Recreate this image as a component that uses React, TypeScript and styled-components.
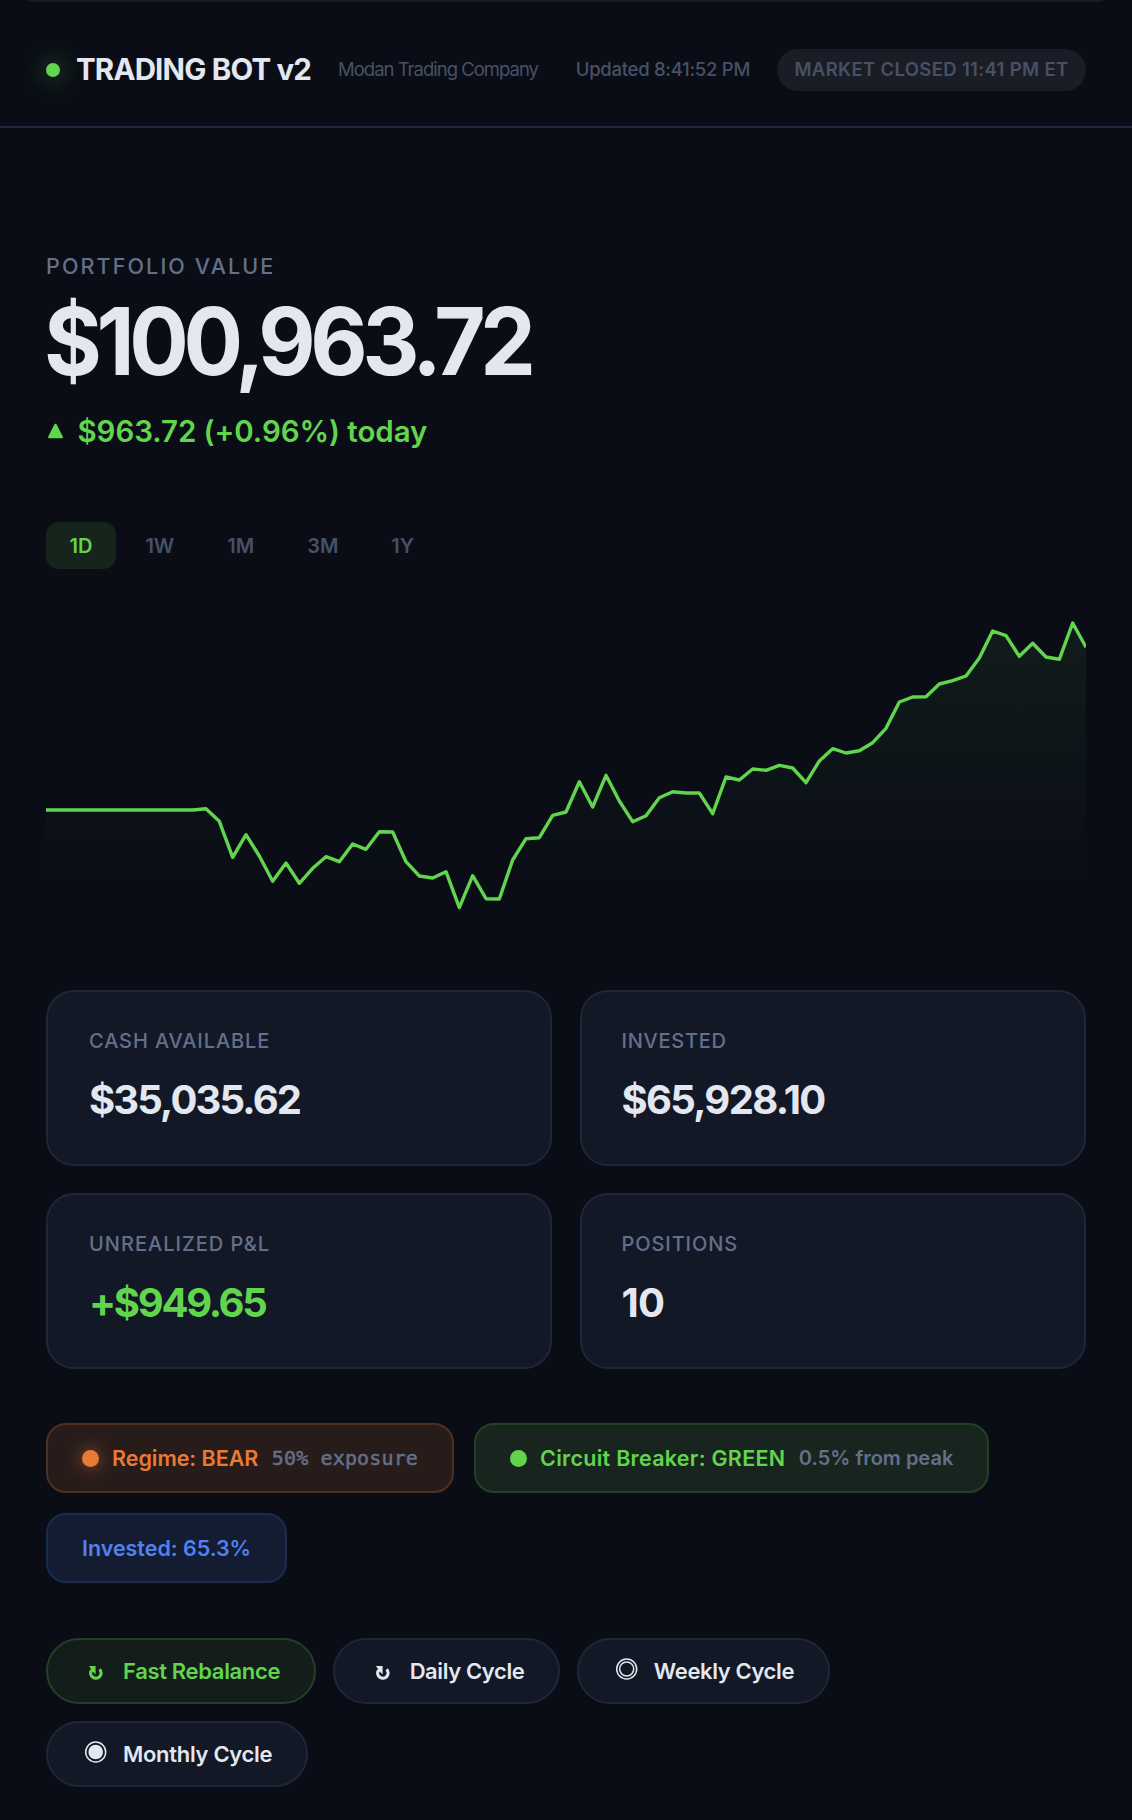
import React from "react";
import styled, { createGlobalStyle } from "styled-components";

const c = {
  bg: "#0a0d16",
  card: "#121826",
  line: "#1e2738",
  text: "#e3e7f0",
  muted: "#64708a",
  dim: "#475166",
  green: "#62d54f",
  orange: "#e87a35",
  blue: "#4f82f0",
};

const Global = createGlobalStyle`
  *, *::before, *::after { box-sizing: border-box; }
  html, body { margin: 0; background: ${c.bg}; }
  body { font-family: Inter, "Liberation Sans", sans-serif; color: ${c.text}; -webkit-font-smoothing: antialiased; }
  button { font-family: inherit; margin: 0; }
`;

const Page = styled.div`
  width: 1132px;
  height: 1820px;
  overflow: hidden;
  background: ${c.bg};
`;

const TopEdge = styled.div`
  height: 2px;
  margin: 0 28px;
  background: #1a1d25;
  border-radius: 0 0 12px 12px / 0 0 2px 2px;
`;

const Header = styled.header`
  display: flex;
  align-items: center;
  height: 126px;
  padding: 12px 46px 0;
  border-bottom: 2px solid #1e2740;
`;

const Txt = styled.span<{ $ls?: number }>`
  letter-spacing: ${(p) => p.$ls ?? 0}px;
  white-space: nowrap;
`;

const LiveDot = styled.span`
  width: 14px;
  height: 14px;
  border-radius: 50%;
  background: ${c.green};
  box-shadow: 0 0 24px rgba(98, 213, 79, 0.65);
`;

const Title = styled.h1`
  margin: 0 0 0 16px;
  padding-bottom: 2px;
  width: 262px;
  font-size: 29.5px;
  font-weight: 700;
  line-height: 36px;
`;

const Company = styled.span`
  padding-bottom: 2px;
  font-size: 18.5px;
  line-height: 24px;
  color: ${c.dim};
`;

const HeaderRight = styled.div`
  display: flex;
  align-items: center;
  gap: 27px;
  margin-left: auto;
`;

const Updated = styled.span`
  padding-bottom: 2px;
  font-size: 18.5px;
  font-weight: 500;
  line-height: 24px;
  color: ${c.dim};
`;

const MarketBadge = styled.span`
  display: flex;
  align-items: center;
  justify-content: center;
  width: 309px;
  height: 42px;
  padding-bottom: 2px;
  border-radius: 21px;
  background: #1a1d25;
  color: ${c.dim};
  font-size: 18.5px;
  font-weight: 600;
`;

const Main = styled.main`
  padding: 126px 46px 0;
`;

const HeroLabel = styled.div`
  font-size: 21.5px;
  font-weight: 500;
  line-height: 24px;
  color: ${c.muted};
`;

const HeroValue = styled.div`
  margin: 16px 0 0 -2px;
  font-size: 93px;
  font-weight: 700;
  line-height: 94px;
  transform: scaleX(0.95);
  transform-origin: left center;
`;

const Change = styled.div`
  display: flex;
  align-items: center;
  gap: 14.5px;
  margin-top: 25px;
  height: 36px;
  padding-left: 2px;
  font-size: 29.5px;
  font-weight: 600;
  line-height: 36px;
  color: ${c.green};
`;

const Tabs = styled.div`
  display: flex;
  gap: 6px;
  margin-top: 73px;
`;

const Tab = styled.button<{ $active?: boolean }>`
  height: 47px;
  padding: 0 23.5px;
  border: 0;
  border-radius: 13px;
  background: ${(p) => (p.$active ? "#16241c" : "transparent")};
  color: ${(p) => (p.$active ? c.green : c.dim)};
  font-size: 20px;
  font-weight: 600;
`;

const ChartSvg = styled.svg`
  display: block;
  margin-top: 31px;
`;

const Stats = styled.section`
  display: grid;
  grid-template-columns: 1fr 1fr;
  gap: 27px 28px;
  margin-top: 60px;
`;

const StatCard = styled.div`
  height: 176px;
  padding: 36px 41px;
  border: 2px solid ${c.line};
  border-radius: 28px;
  background: ${c.card};

  &:nth-child(even) {
    padding-left: 39.5px;
  }
`;

const StatLabel = styled.div`
  font-size: 20px;
  font-weight: 500;
  line-height: 26px;
  color: ${c.muted};
`;

const StatValue = styled.div<{ $up?: boolean }>`
  margin-top: 23px;
  font-size: 40px;
  font-weight: 700;
  line-height: 46px;
  color: ${(p) => (p.$up ? c.green : c.text)};
`;

const Pills = styled.section`
  display: flex;
  flex-wrap: wrap;
  gap: 20px;
  margin-top: 54px;
`;

const Pill = styled.div<{ $fg: string; $bg: string; $line: string }>`
  display: flex;
  align-items: center;
  height: 70px;
  padding: 0 34px;
  border: 2px solid ${(p) => p.$line};
  border-radius: 20px;
  background: ${(p) => p.$bg};
  color: ${(p) => p.$fg};
  font-size: 21.5px;
  font-weight: 600;
`;

const PillDot = styled.span<{ $glow?: boolean }>`
  width: 17px;
  height: 17px;
  margin-right: 13px;
  border-radius: 50%;
  background: currentColor;
  box-shadow: ${(p) => (p.$glow ? "0 0 16px rgba(232, 122, 53, 0.6)" : "none")};
`;

const PillNote = styled.span<{ $mono?: boolean }>`
  margin-left: 13.5px;
  padding-bottom: 1px;
  font-family: ${(p) => (p.$mono ? '"DejaVu Sans Mono", monospace' : "inherit")};
  font-weight: ${(p) => (p.$mono ? 400 : 600)};
  -webkit-text-stroke: ${(p) => (p.$mono ? "0.5px currentColor" : "0")};
  font-size: 20px;
  color: ${c.muted};
`;

const Actions = styled.section`
  display: flex;
  flex-wrap: wrap;
  gap: 17px;
  margin-top: 55px;
`;

const Action = styled.button<{ $primary?: boolean }>`
  display: flex;
  align-items: center;
  height: 66px;
  padding: 0 33.5px 0 34px;
  border: 2px solid ${(p) => (p.$primary ? "#224124" : c.line)};
  border-radius: 33px;
  background: ${(p) => (p.$primary ? "#131e1b" : c.card)};
  color: ${(p) => (p.$primary ? c.green : c.text)};
  font-size: 22px;
  font-weight: 600;
`;

const Glyph = styled.svg`
  display: block;
  width: 28px;
  height: 28px;
  margin-right: 13px;
`;

const STEP = 1040 / 78;
const flat = Array(12).fill(810);
const series: number[] = [
  ...flat,
  808.7, 821.3, 857.3, 834.7, 856, 881.3, 863, 883.3, 868.3, 856.7, 861.7, 844, 849.3, 831.7, 832,
  861.7, 876, 878, 871.7, 907.7, 875.7, 898.7, 899, 860, 838.7, 837.7, 815.3, 812, 781.7, 807, 775.3,
  801, 821.7, 815.7, 797.7, 791.7, 793, 793, 813.7, 777, 780, 769, 770.3, 765.3, 768, 782.7, 761,
  748.7, 753, 750.7, 742.7, 728.3, 702, 697, 696.7, 684, 680.7, 676, 658, 631, 635.7, 656.3, 643.3,
  657, 659.3, 623, 647.3,
];
const line = series.map((y, i) => `${(i * STEP).toFixed(2)},${(y - 600).toFixed(1)}`).join(" ");

function Chart() {
  return (
    <ChartSvg width="1040" height="330" viewBox="0 0 1040 330">
      <defs>
        <linearGradient id="area" gradientUnits="userSpaceOnUse" x1="0" y1="0" x2="0" y2="280">
          <stop offset="0" stopColor={c.green} stopOpacity="0.085" />
          <stop offset="1" stopColor={c.green} stopOpacity="0" />
        </linearGradient>
      </defs>
      <polygon points={`0,330 ${line} 1040,330`} fill="url(#area)" />
      <polyline points={line} fill="none" stroke={c.green} strokeWidth="3.4" strokeLinejoin="round" />
    </ChartSvg>
  );
}

function CycleGlyph() {
  return (
    <Glyph viewBox="0 0 28 28">
      <path d="M17.6 12.4 A5.2 5.2 0 1 1 9.4 13.4" fill="none" stroke="currentColor" strokeWidth="3.2" />
      <path d="M7 9 H13.6 V17.4 L10.9 14.8 L8.2 15 L9 12 Z" fill="currentColor" />
    </Glyph>
  );
}

function RingGlyph({ filled }: { filled?: boolean }) {
  return (
    <Glyph viewBox="0 0 28 28">
      <circle cx="13.7" cy="12" r="10" fill="none" stroke="currentColor" strokeWidth="1.5" />
      {filled ? (
        <circle cx="13.7" cy="12" r="7.3" fill="currentColor" />
      ) : (
        <circle cx="13.7" cy="12" r="7" fill="none" stroke="currentColor" strokeWidth="1.5" />
      )}
    </Glyph>
  );
}

const tabs = ["1D", "1W", "1M", "3M", "1Y"];

const stats: { label: string; ls: number; value: string; vls: number; up?: boolean }[] = [
  { label: "CASH AVAILABLE", ls: 0.9, value: "$35,035.62", vls: -1.85 },
  { label: "INVESTED", ls: 0.75, value: "$65,928.10", vls: -1.7 },
  { label: "UNREALIZED P&L", ls: 1, value: "+$949.65", vls: -2.3, up: true },
  { label: "POSITIONS", ls: 0.9, value: "10", vls: -0.8 },
];

export default function App() {
  return (
    <Page>
      <Global />
      <TopEdge />
      <Header>
        <LiveDot />
        <Title><Txt $ls={-0.82}>TRADING BOT v2</Txt></Title>
        <Company><Txt $ls={-1}>Modan Trading Company</Txt></Company>
        <HeaderRight>
          <Updated><Txt $ls={-0.27}>Updated 8:41:52 PM</Txt></Updated>
          <MarketBadge><Txt $ls={0.34}>MARKET CLOSED 11:41 PM ET</Txt></MarketBadge>
        </HeaderRight>
      </Header>
      <Main>
        <HeroLabel><Txt $ls={2.12}>PORTFOLIO VALUE</Txt></HeroLabel>
        <HeroValue><Txt $ls={-5.6}>$100,963.72</Txt></HeroValue>
        <Change>
          <svg width="15" height="16" viewBox="0 0 15 16">
            <path d="M7.5 2 L13.6 14 H1.4 Z" fill="currentColor" stroke="currentColor" strokeWidth="2.6" strokeLinejoin="round" />
          </svg>
          <Txt $ls={-0.07}>$963.72 (+0.96%) today</Txt>
        </Change>
        <Tabs>
          {tabs.map((t, i) => (
            <Tab key={t} $active={i === 0}>{t}</Tab>
          ))}
        </Tabs>
        <Chart />
        <Stats>
          {stats.map((s) => (
            <StatCard key={s.label}>
              <StatLabel><Txt $ls={s.ls}>{s.label}</Txt></StatLabel>
              <StatValue $up={s.up}><Txt $ls={s.vls}>{s.value}</Txt></StatValue>
            </StatCard>
          ))}
        </Stats>
        <Pills>
          <Pill $fg={c.orange} $bg="#281c1a" $line="#4f3020">
            <PillDot $glow />
            <Txt $ls={-0.04}>Regime: BEAR</Txt>
            <PillNote $mono><Txt $ls={0.15}>50% exposure</Txt></PillNote>
          </Pill>
          <Pill $fg={c.green} $bg="#18251e" $line="#224124">
            <PillDot />
            <Txt $ls={0.28}>Circuit Breaker: GREEN</Txt>
            <PillNote><Txt>0.5% from peak</Txt></PillNote>
          </Pill>
          <Pill $fg={c.blue} $bg="#141c31" $line="#1a2b50">
            <Txt $ls={-0.03}>Invested: 65.3%</Txt>
          </Pill>
        </Pills>
        <Actions>
          <Action $primary><CycleGlyph /><Txt $ls={-0.34}>Fast Rebalance</Txt></Action>
          <Action><CycleGlyph /><Txt $ls={-0.4}>Daily Cycle</Txt></Action>
          <Action><RingGlyph /><Txt $ls={-0.38}>Weekly Cycle</Txt></Action>
          <Action><RingGlyph filled /><Txt $ls={-0.31}>Monthly Cycle</Txt></Action>
        </Actions>
      </Main>
    </Page>
  );
}
